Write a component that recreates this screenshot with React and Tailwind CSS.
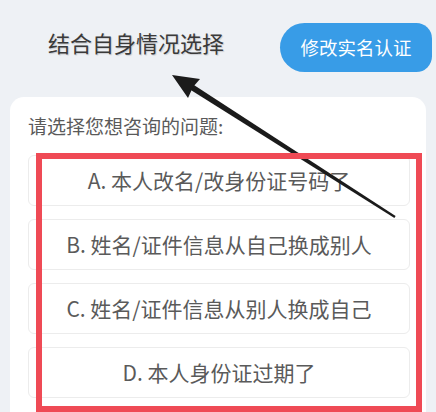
const options = [
  "A. 本人改名/改身份证号码了",
  "B. 姓名/证件信息从自己换成别人",
  "C. 姓名/证件信息从别人换成自己",
  "D. 本人身份证过期了",
];

const Arrow = () => (
  <svg
    className="absolute left-0 top-0 pointer-events-none"
    width="436"
    height="412"
    viewBox="0 0 436 412"
  >
    {/* tapered shaft */}
    <polygon points="395.6,216.1 394.4,217.9 188.4,88.4 191.6,83.6" fill="#1b1b1b" />
    {/* head */}
    <polygon points="172,75 200,79 193,87 188,98" fill="#1b1b1b" />
  </svg>
);

const App = () => {
  return (
    <div
      className="relative w-[436px] h-[412px] overflow-hidden bg-[#eef1f5]"
      style={{ fontFamily: '"Noto Sans CJK SC", "Noto Sans", sans-serif' }}
    >
      <div className="flex items-start h-[97px]">
        <div className="ml-[48px] mt-[27px] text-[22px] leading-[30px] text-[#3a3a3a] [text-shadow:1px_1px_1px_rgba(0,0,0,0.15)]">
          结合自身情况选择
        </div>
        <div className="ml-auto mr-[4px] mt-[23px] w-[152px] h-[49px] flex items-center justify-center rounded-l-[25px] rounded-r-[16px] bg-[#389ce7] text-white text-[18.5px]">
          修改实名认证
        </div>
      </div>

      <div className="mx-[10px] w-[416px] h-[330px] rounded-[14px] bg-white pl-[18px] pr-[16px] pt-[16px]">
        <div className="text-[19px] leading-[26px] text-[#5a5a5a]">
          请选择您想咨询的问题:
        </div>
        <div className="mt-[16px] flex flex-col gap-[13px]">
          {options.map((o) => (
            <div
              key={o}
              className="h-[51px] flex items-center justify-center rounded-[6px] border border-[#ececec] bg-white text-[21px] text-[#5a5a5a]"
            >
              {o}
            </div>
          ))}
        </div>
      </div>

      <Arrow />
      <div className="absolute left-[36px] top-[153px] w-[386px] h-[259px] border-[6px] border-[#ef4a55]" />
    </div>
  );
};

export default App;
